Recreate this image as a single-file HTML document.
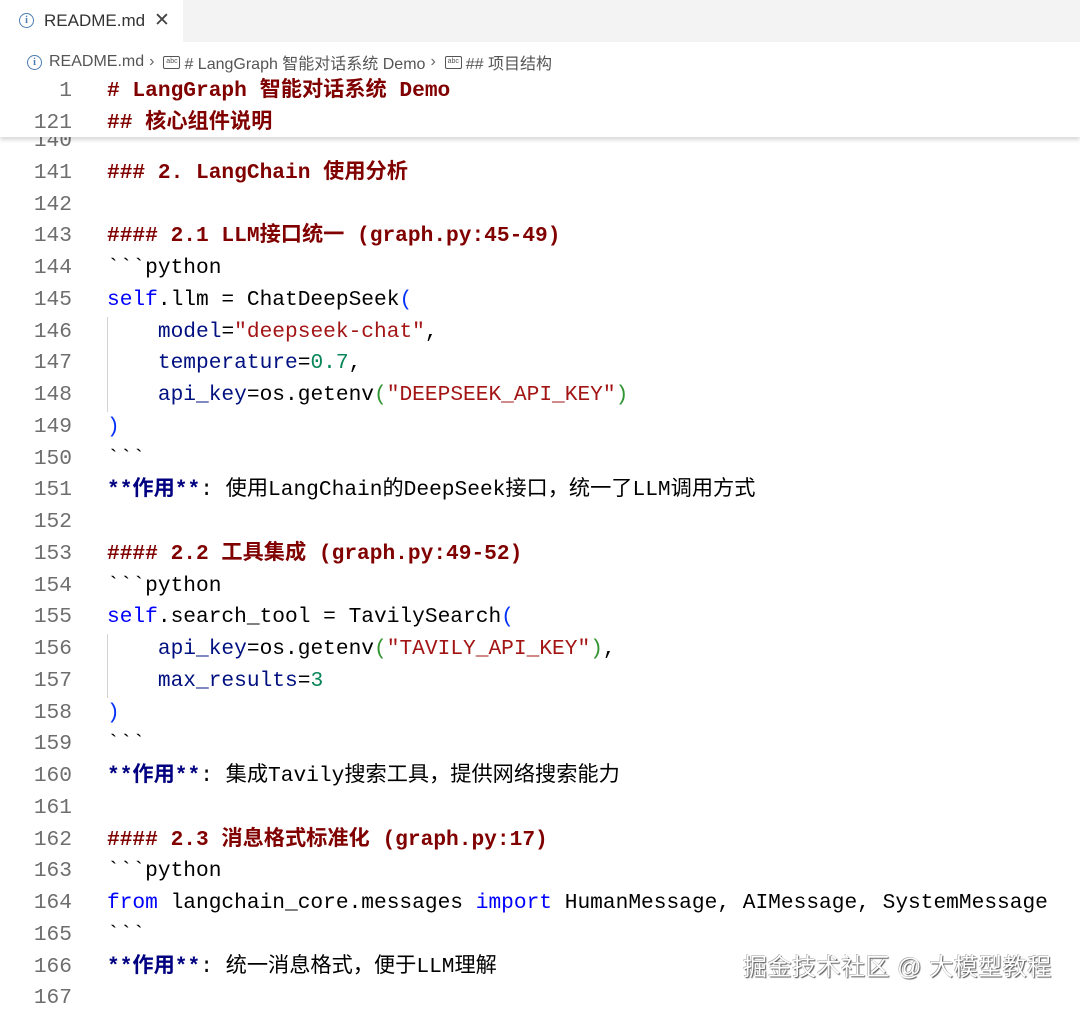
<!DOCTYPE html>
<html><head><meta charset="utf-8"><style>
*{margin:0;padding:0;box-sizing:border-box}
body{width:1080px;height:1002px;background:#fff;position:relative;overflow:hidden;font-family:"Liberation Sans","Noto Sans CJK SC",sans-serif}
.tabbar{position:absolute;left:0;top:0;width:1080px;height:42px;background:#f3f3f3}
.tab{position:absolute;left:0;top:0;width:183px;height:42px;background:#fff;font-size:17px;color:#333}
.tab .t{position:absolute;left:44px;top:11px}
.tab .x{position:absolute;left:154px;top:9px;font-size:19px;color:#444}
.info{position:absolute;width:15px;height:15px;border:1.3px solid #4a7cb0;border-radius:50%;font-size:10px;color:#4a7cb0;text-align:center;line-height:13px;font-family:"Liberation Serif",serif;font-weight:bold}
.bc{position:absolute;left:27px;top:50px;font-size:16px;color:#555;white-space:nowrap;display:flex;align-items:center}
.abc{display:inline-block;width:17px;height:13px;border:1.3px solid #555;border-radius:2px;font-size:7px;line-height:10px;text-align:center;margin:0 4px 0 4px;vertical-align:middle}
.sep{margin:0 5px;color:#666}
.code{position:absolute;left:0;top:126px;width:1080px}
.ln,.sl{height:31.75px;line-height:31.75px;font-family:"Liberation Mono","Noto Sans CJK SC",monospace;font-size:21.2px;white-space:pre;position:relative}
.n{position:absolute;right:1008px;color:#6e6e6e;text-align:right}
.c{position:absolute;left:107px;color:#000}
.h{color:#800000;font-weight:bold}
.b{color:#000080;font-weight:bold}
.kw{color:#0000ff}
.p{color:#001080}
.s{color:#a31515}
.num{color:#098658}
.pb{color:#0431fa}
.pg{color:#319331}
.sticky{position:absolute;left:0;top:75px;width:1080px;height:62px;background:#fff;box-shadow:0 3px 4px rgba(0,0,0,0.15);z-index:2;padding-top:1px}
.guide{position:absolute;left:107px;width:1px;background:#d3d3d3}
.wm{position:absolute;left:743px;top:947px;font-size:24px;color:#fff;text-shadow:1px 1px 1px #555,-0.5px -0.5px 0 #999;z-index:3;letter-spacing:0.5px}
</style></head><body>
<div class="tabbar"><div class="tab"><span class="info" style="left:19px;top:13px">i</span><span class="t">README.md</span><span class="x">✕</span></div></div>
<div class="bc"><span class="info" style="position:relative;display:inline-block;margin-right:7px">i</span>README.md<span class="sep">›</span><span class="abc">abc</span># LangGraph 智能对话系统 Demo<span class="sep">›</span><span class="abc">abc</span>## 项目结构</div>
<div class="sticky">
<div class="sl"><span class="n">1</span><span class="c h"># LangGraph 智能对话系统 Demo</span></div>
<div class="sl"><span class="n">121</span><span class="c h">## 核心组件说明</span></div>
</div>
<div class="guide" style="top:317px;height:95px"></div>
<div class="guide" style="top:634px;height:64px"></div>
<div class="code">
<div class="ln"><span class="n">140</span></div>
<div class="ln"><span class="n">141</span><span class="c h">### 2. LangChain 使用分析</span></div>
<div class="ln"><span class="n">142</span></div>
<div class="ln"><span class="n">143</span><span class="c h">#### 2.1 LLM接口统一 (graph.py:45-49)</span></div>
<div class="ln"><span class="n">144</span><span class="c">&#96;&#96;&#96;python</span></div>
<div class="ln"><span class="n">145</span><span class="c"><span class="kw">self</span>.llm = ChatDeepSeek<span class="pb">(</span></span></div>
<div class="ln"><span class="n">146</span><span class="c">    <span class="p">model</span>=<span class="s">"deepseek-chat"</span>,</span></div>
<div class="ln"><span class="n">147</span><span class="c">    <span class="p">temperature</span>=<span class="num">0.7</span>,</span></div>
<div class="ln"><span class="n">148</span><span class="c">    <span class="p">api_key</span>=os.getenv<span class="pg">(</span><span class="s">"DEEPSEEK_API_KEY"</span><span class="pg">)</span></span></div>
<div class="ln"><span class="n">149</span><span class="c"><span class="pb">)</span></span></div>
<div class="ln"><span class="n">150</span><span class="c">&#96;&#96;&#96;</span></div>
<div class="ln"><span class="n">151</span><span class="c"><span class="b">**作用**</span>: 使用LangChain的DeepSeek接口，统一了LLM调用方式</span></div>
<div class="ln"><span class="n">152</span></div>
<div class="ln"><span class="n">153</span><span class="c h">#### 2.2 工具集成 (graph.py:49-52)</span></div>
<div class="ln"><span class="n">154</span><span class="c">&#96;&#96;&#96;python</span></div>
<div class="ln"><span class="n">155</span><span class="c"><span class="kw">self</span>.search_tool = TavilySearch<span class="pb">(</span></span></div>
<div class="ln"><span class="n">156</span><span class="c">    <span class="p">api_key</span>=os.getenv<span class="pg">(</span><span class="s">"TAVILY_API_KEY"</span><span class="pg">)</span>,</span></div>
<div class="ln"><span class="n">157</span><span class="c">    <span class="p">max_results</span>=<span class="num">3</span></span></div>
<div class="ln"><span class="n">158</span><span class="c"><span class="pb">)</span></span></div>
<div class="ln"><span class="n">159</span><span class="c">&#96;&#96;&#96;</span></div>
<div class="ln"><span class="n">160</span><span class="c"><span class="b">**作用**</span>: 集成Tavily搜索工具，提供网络搜索能力</span></div>
<div class="ln"><span class="n">161</span></div>
<div class="ln"><span class="n">162</span><span class="c h">#### 2.3 消息格式标准化 (graph.py:17)</span></div>
<div class="ln"><span class="n">163</span><span class="c">&#96;&#96;&#96;python</span></div>
<div class="ln"><span class="n">164</span><span class="c"><span class="kw">from</span> langchain_core.messages <span class="kw">import</span> HumanMessage, AIMessage, SystemMessage</span></div>
<div class="ln"><span class="n">165</span><span class="c">&#96;&#96;&#96;</span></div>
<div class="ln"><span class="n">166</span><span class="c"><span class="b">**作用**</span>: 统一消息格式，便于LLM理解</span></div>
<div class="ln"><span class="n">167</span></div>
</div>
<div class="wm">掘金技术社区 @ 大模型教程</div>
</body></html>
